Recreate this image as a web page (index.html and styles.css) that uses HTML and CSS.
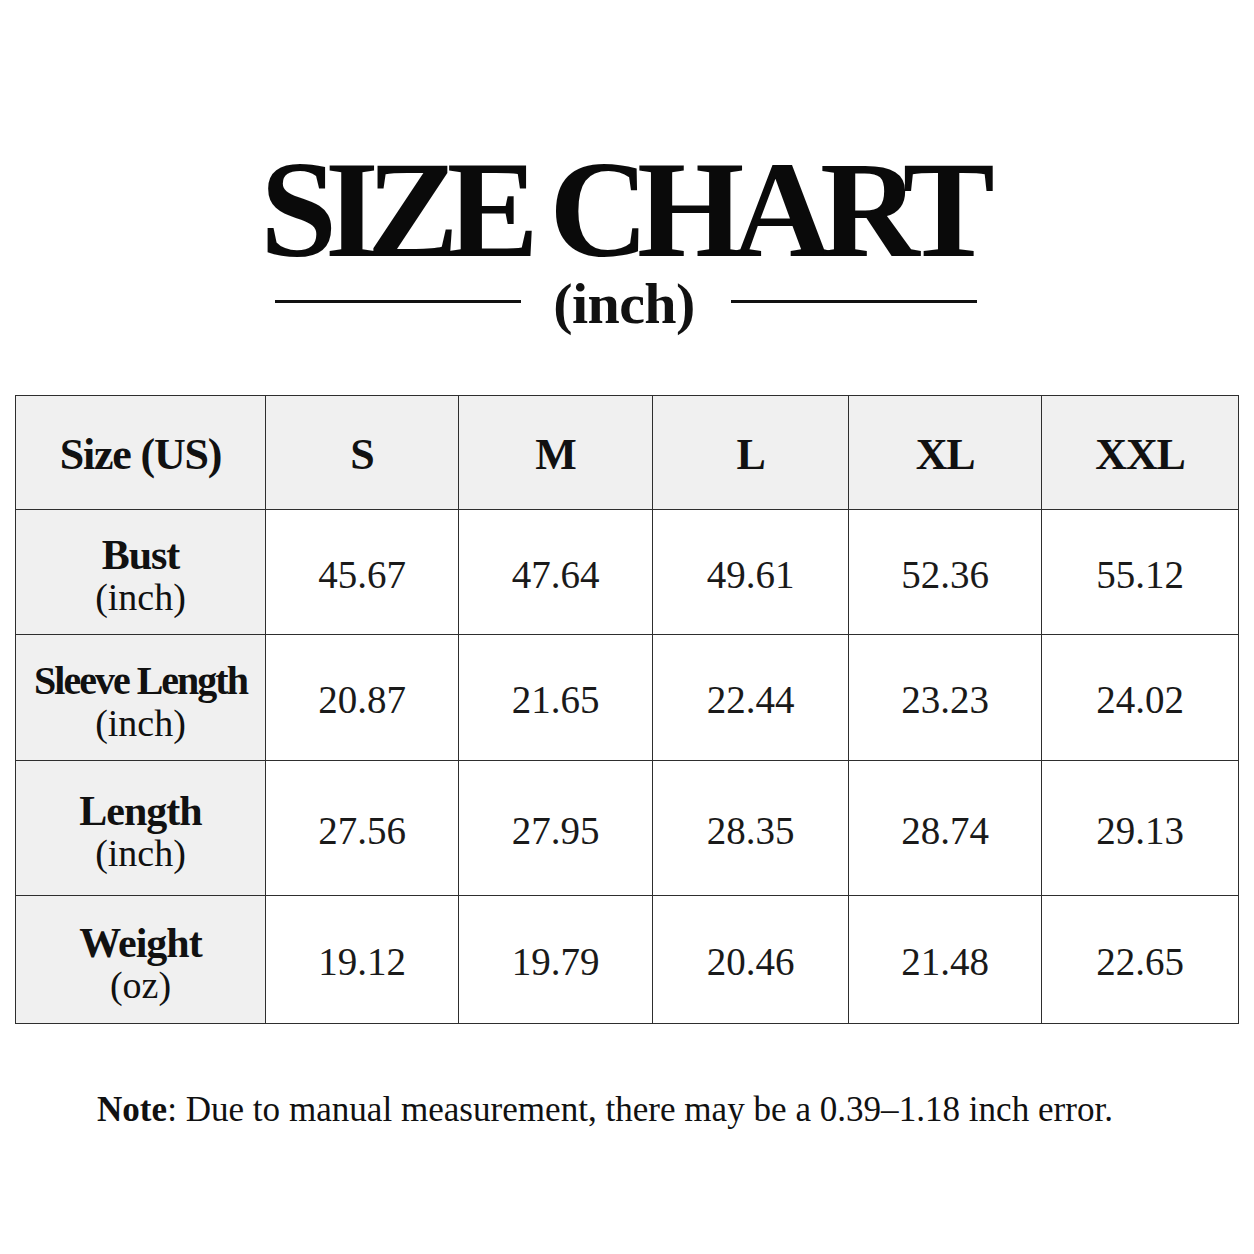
FILE: index.html
```html
<!DOCTYPE html>
<html>
<head>
<meta charset="utf-8">
<link rel="stylesheet" href="styles.css">
</head>
<body>
<div class="page">
  <h1 class="title">SIZE CHART</h1>
  <div class="subtitle">
    <span class="rule"></span>
    <span class="unit">(inch)</span>
    <span class="rule"></span>
  </div>
  <table class="chart">
    <colgroup>
      <col class="c0"><col class="c1"><col class="c2"><col class="c3"><col class="c4"><col class="c5">
    </colgroup>
    <tr class="head r0">
      <th class="label">Size (US)</th><th>S</th><th>M</th><th>L</th><th>XL</th><th>XXL</th>
    </tr>
    <tr class="r1">
      <th class="label"><span class="lname">Bust</span><span class="lunit">(inch)</span></th>
      <td>45.67</td><td>47.64</td><td>49.61</td><td>52.36</td><td>55.12</td>
    </tr>
    <tr class="r2">
      <th class="label"><span class="lname long">Sleeve Length</span><span class="lunit">(inch)</span></th>
      <td>20.87</td><td>21.65</td><td>22.44</td><td>23.23</td><td>24.02</td>
    </tr>
    <tr class="r3">
      <th class="label"><span class="lname">Length</span><span class="lunit">(inch)</span></th>
      <td>27.56</td><td>27.95</td><td>28.35</td><td>28.74</td><td>29.13</td>
    </tr>
    <tr class="r4">
      <th class="label"><span class="lname">Weight</span><span class="lunit">(oz)</span></th>
      <td>19.12</td><td>19.79</td><td>20.46</td><td>21.48</td><td>22.65</td>
    </tr>
  </table>
  <p class="note"><b>Note</b>: Due to manual measurement, there may be a 0.39–1.18 inch error.</p>
</div>
</body>
</html>
```

FILE: styles.css
```css
html, body {
  margin: 0;
  padding: 0;
  background: #ffffff;
}
.page {
  width: 1254px;
  height: 1254px;
  font-family: "Liberation Serif", "Times New Roman", serif;
  color: #111111;
  overflow: hidden;
}
.title {
  margin: 142px 0 0 0;
  font-size: 138px;
  line-height: 136px;
  font-weight: bold;
  letter-spacing: -12px;
  text-align: center;
  padding-right: 11px;
  color: #0a0a0a;
}
.subtitle {
  display: flex;
  align-items: center;
  justify-content: center;
  height: 52px;
  padding-right: 2px;
}
.rule {
  display: block;
  width: 246px;
  height: 3px;
  background: #111;
  margin-bottom: 6px;
}
.unit {
  font-size: 58px;
  line-height: 52px;
  font-weight: bold;
  letter-spacing: -0.6px;
  margin: 0 36px 0 32px;
}
.chart {
  margin: 65px 0 0 15px;
  width: 1223px;
  border-collapse: collapse;
  table-layout: fixed;
}
.c0 { width: 250px; }
.c1 { width: 193px; }
.c2 { width: 194px; }
.c3 { width: 196px; }
.c4 { width: 193px; }
.c5 { width: 197px; }
.chart th, .chart td {
  border: 1.5px solid #2e2e2e;
  text-align: center;
  vertical-align: middle;
  padding: 0;
}
.chart td {
  font-size: 39px;
  font-weight: normal;
  background: #ffffff;
  padding-top: 4px;
  color: #1a1a1a;
}
.head th {
  background: #f0f0f0;
  font-size: 44px;
  font-weight: bold;
  letter-spacing: -1.2px;
  padding-top: 4px;
}
.chart th.label {
  background: #f0f0f0;
}
.r0 { height: 114px; }
.r1 { height: 125px; }
.r2 { height: 126px; }
.r3 { height: 135px; }
.r4 { height: 128px; }
.lname, .lunit {
  display: block;
  font-size: 38px;
  line-height: 42px;
}
.lname {
  font-weight: bold;
  font-size: 42px;
  letter-spacing: -1px;
}
.lname.long {
  font-size: 40px;
  letter-spacing: -2px;
}
.lunit {
  font-weight: normal;
}
.r1 .label, .r2 .label, .r3 .label, .r4 .label {
  padding-top: 8px;
}
.note {
  margin: 68px 0 0 97px;
  font-size: 35.1px;
  line-height: 1;
  color: #111;
}
.note b {
  font-weight: bold;
}
```
